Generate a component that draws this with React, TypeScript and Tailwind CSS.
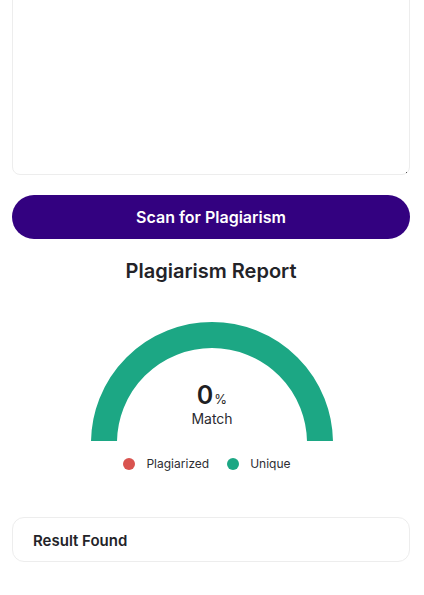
import React from "react";

function Gauge() {
  // half-donut, center at (125, 122), trimmed a little at the base
  return (
    <div className="relative mx-auto h-[120px] w-[250px] translate-x-[1px]">
      <svg width="250" height="120" viewBox="0 0 250 120" className="block">
        <path
          d="M 17 122 A 108 108 0 0 1 233 122"
          fill="none"
          stroke="#1ca784"
          strokeWidth="26"
        />
      </svg>
      <div className="absolute inset-x-0 top-[62px] flex flex-col items-center">
        <div className="flex items-baseline leading-none text-[#1f1f24]">
          <span className="text-[25px] font-semibold">0</span>
          <span className="ml-[1px] text-[13px]">%</span>
        </div>
        <div className="mt-[4px] text-[14px] leading-none text-[#2a2a30]">Match</div>
      </div>
    </div>
  );
}

export default function App() {
  return (
    <div
      className="min-h-[595px] w-[424px] overflow-hidden bg-white pl-3 pr-[14px]"
      style={{ fontFamily: "Inter, 'Noto Sans', sans-serif" }}
    >
      <div className="relative">
        <textarea
          className="-mt-[20px] block h-[195px] w-full resize-none rounded-lg border border-[#ededed] bg-white"
          aria-label="Text to scan"
        />
        <span className="absolute bottom-[2px] right-[3px] h-[1px] w-[1px] bg-[#555]" />
      </div>

      <button className="mt-[20px] flex h-[44px] w-full items-center justify-center rounded-full bg-[#330180] text-[16px] font-semibold text-white">
        Scan for Plagiarism
      </button>

      <h2 className="mt-[20px] text-center text-[20px] font-semibold leading-[24px] text-[#232328]">
        Plagiarism Report
      </h2>

      <div className="mt-[38px]">
        <Gauge />
      </div>

      <div className="mt-[14px] flex items-center justify-center pr-[8px] text-[12px] text-[#2e2e33]">
        <span className="h-[12px] w-[12px] rounded-full bg-[#d9534f]" />
        <span className="ml-[11px]">Plagiarized</span>
        <span className="ml-[18px] h-[12px] w-[12px] rounded-full bg-[#1ca784]" />
        <span className="ml-[11px]">Unique</span>
      </div>

      <div className="mt-[44px] flex h-[45px] items-center rounded-xl border border-[#ededed] px-[20px] pt-[3px]">
        <span className="text-[15px] font-semibold text-[#232328]">Result Found</span>
      </div>
    </div>
  );
}
